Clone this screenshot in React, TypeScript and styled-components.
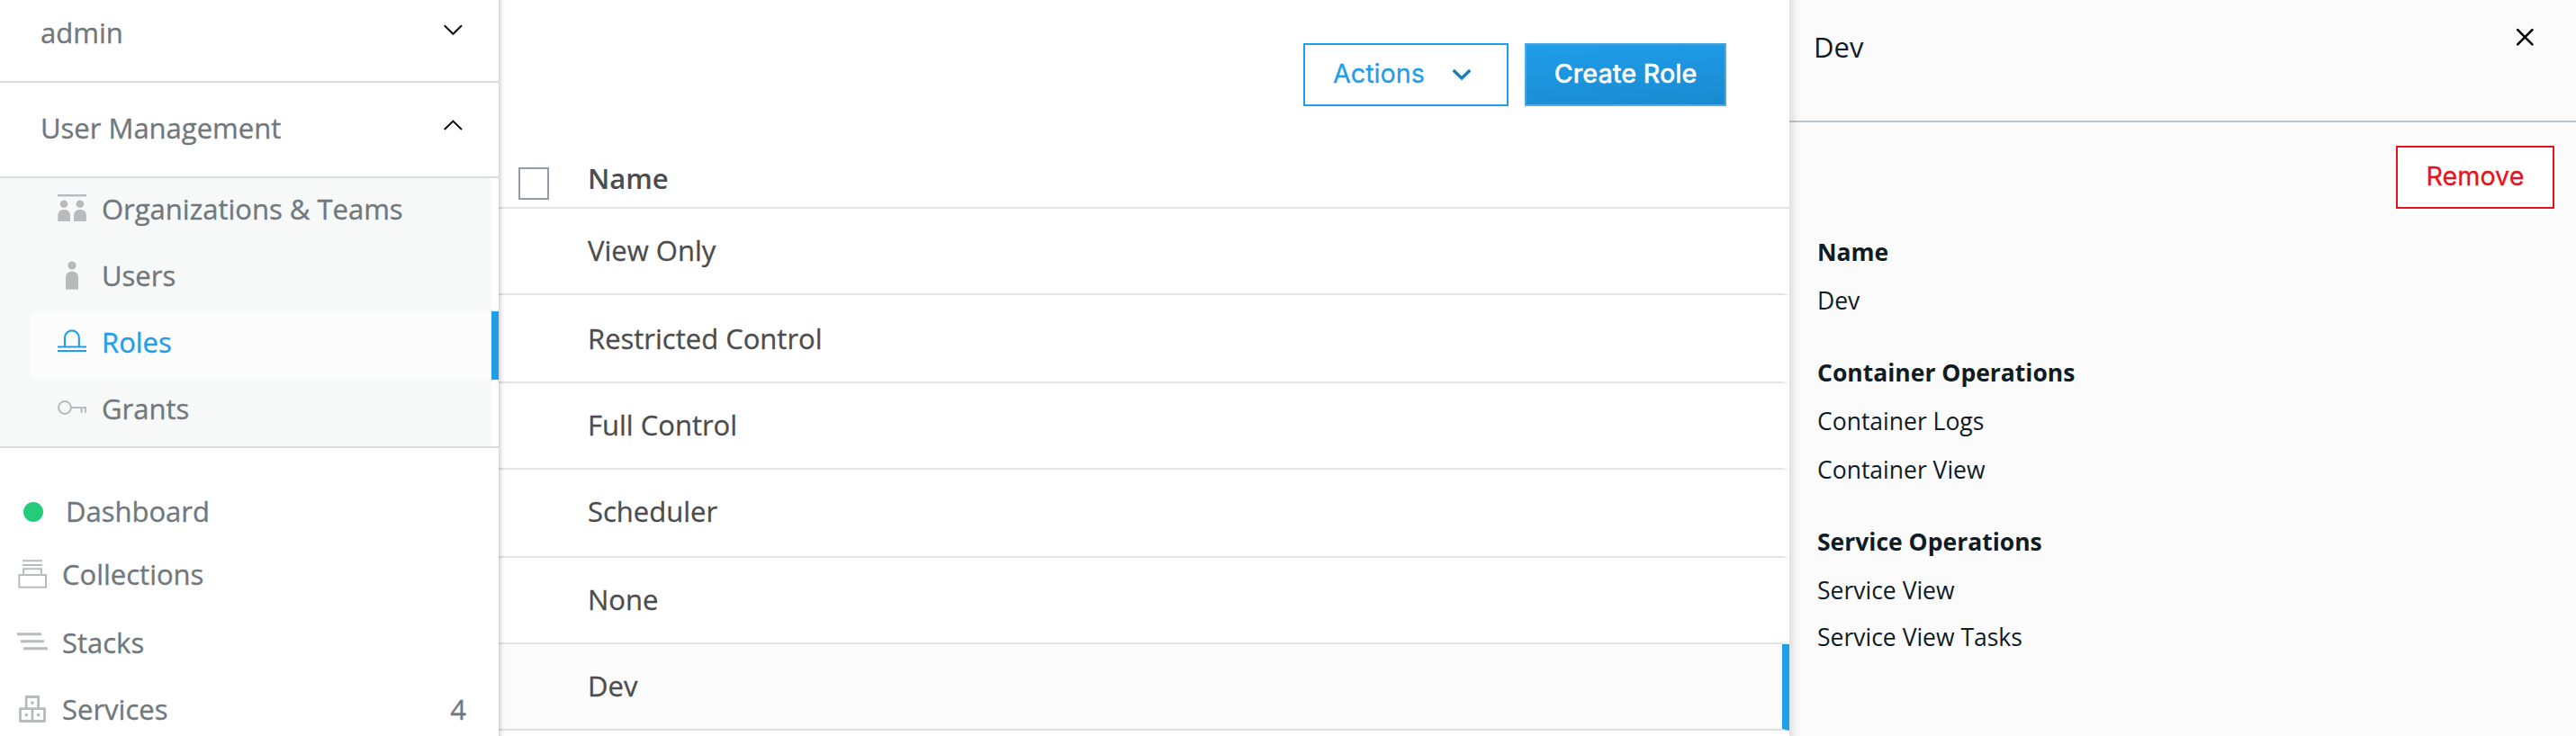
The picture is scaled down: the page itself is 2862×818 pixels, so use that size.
import React from 'react';
import styled, { createGlobalStyle, css } from 'styled-components';

const blue = '#1f9ee9';

const GlobalStyle = createGlobalStyle`
  * { box-sizing: border-box; }
  body {
    margin: 0;
    background: #fff;
    font-family: "Open Sans", "Noto Sans", sans-serif;
    font-size: 31px;
  }
  button { font: inherit; cursor: pointer; }
`;

const Page = styled.div`
  display: grid;
  grid-template-columns: 554px 1434px 1fr;
  height: 818px;
  overflow: hidden;
`;

/* Sidebar */

const Sidebar = styled.nav`
  display: flex;
  flex-direction: column;
  color: #70787d;
  background: #fff;
  overflow: hidden;
  -webkit-text-stroke: 0.35px currentColor;
`;

const SectionHeader = styled.div<{ $height: number; $line: number }>`
  display: flex;
  flex: none;
  justify-content: space-between;
  height: ${p => p.$height}px;
  padding: 0 40px 0 45px;
  line-height: ${p => p.$line}px;
  border-bottom: 2px solid #dcdcdc;
`;

const SectionChevron = styled.svg<{ $top: number }>`
  width: 22px;
  height: 14px;
  margin-top: ${p => p.$top}px;
  fill: none;
  stroke: #0a0a0a;
  stroke-width: 2;
`;

const SubMenu = styled.div`
  flex: none;
  height: 300px;
  padding-right: 8px;
  border-bottom: 2px solid #dcdcdc;
  background: #f7f9f8;
  background-clip: content-box;
`;

const SubItem = styled.div<{ $active?: boolean }>`
  display: flex;
  align-items: center;
  gap: 17px;
  height: 74px;
  margin-left: 34px;
  padding: 0 0 6px 30px;
  line-height: 68px;
  ${p =>
    p.$active &&
    css`
      height: 76px;
      margin-right: -8px;
      margin-bottom: -2px;
      padding-bottom: 8px;
      border-right: 8px solid ${blue};
      background: #fcfcfc;
      color: ${blue};
    `}
`;

const SubIcon = styled.svg<{ $active?: boolean }>`
  width: 32px;
  height: 40px;
  color: ${p => (p.$active ? blue : '#b8bbbe')};
`;

const NavList = styled.div`
  padding-top: 35px;
`;

const NavItem = styled.div<{ $after?: number }>`
  display: flex;
  align-items: center;
  gap: 16px;
  height: 70px;
  margin-bottom: ${p => p.$after ?? 0}px;
  padding: 0 36px 0 19px;
  line-height: 70px;
`;

const NavIcon = styled.svg`
  width: 34px;
  height: 40px;
  color: #b8bbbe;
`;

const StatusDot = styled.span`
  width: 22px;
  height: 22px;
  margin: 2px 9px 0 7px;
  border-radius: 50%;
  background: #24cb7a;
`;

const Count = styled.span`
  margin-left: auto;
`;

/* Role list */

const Main = styled.main`
  position: relative;
  display: flex;
  flex-direction: column;
  background: #fff;
  color: #4c4c4c;
  -webkit-text-stroke: 0.3px currentColor;

  &::before {
    content: '';
    position: absolute;
    inset: 0 auto 0 0;
    width: 8px;
    background: linear-gradient(to right, rgba(0, 0, 0, 0.17), rgba(0, 0, 0, 0.06) 38%, rgba(0, 0, 0, 0.015) 72%, transparent);
  }
`;

const Toolbar = styled.div`
  display: flex;
  justify-content: flex-end;
  gap: 18px;
  padding: 48px 70px 0 0;
`;

const Button = styled.button<{ $kind: 'outline' | 'primary' | 'danger'; $width: number }>`
  display: flex;
  align-items: center;
  justify-content: center;
  width: ${p => p.$width}px;
  height: 70px;
  padding: 0 0 3px;
  border: 2px solid ${blue};
  border-radius: 0;
  background: #fff;
  color: ${blue};
  font-family: Inter, "Liberation Sans", sans-serif;
  font-size: 28.7px;
  -webkit-text-stroke: 0.3px currentColor;
  ${p =>
    p.$kind === 'outline' &&
    css`
      justify-content: space-between;
      padding-left: 31px;
      padding-right: 39px;
    `}
  ${p =>
    p.$kind === 'primary' &&
    css`
      border-color: rgba(255, 255, 255, 0.2);
      background: linear-gradient(175deg, #1f9ee9, #1a8ad0);
      color: #fff;
      font-weight: 500;
    `}
  ${p =>
    p.$kind === 'danger' &&
    css`
      border-color: #e51320;
      color: #e51320;
    `}
`;

const ButtonChevron = styled.svg`
  width: 22px;
  height: 14px;
  margin-top: 2px;
  fill: none;
  stroke: #1a7cb8;
  stroke-width: 3.4;
`;

const TableHead = styled.div`
  display: flex;
  height: 114px;
  padding-left: 22px;
  border-bottom: 2px solid #e3e3e3;
  font-weight: 600;
  -webkit-text-stroke: 0;
`;

const Checkbox = styled.span`
  width: 34px;
  height: 36px;
  margin-top: 68px;
  border: 2px solid #919da8;
  background: #fff;
`;

const HeadLabel = styled.span`
  margin-left: 43px;
  padding-top: 44px;
  line-height: 72px;
`;

const Row = styled.div<{ $height: number; $offset?: number; $selected?: boolean }>`
  flex: none;
  height: ${p => p.$height}px;
  padding: ${p => p.$offset ?? 0}px 0 0 99px;
  border-right: 8px solid ${p => (p.$selected ? blue : 'transparent')};
  border-bottom: 2px solid ${p => (p.$selected ? '#dfdfdf' : '#e3e3e3')};
  background: ${p => (p.$selected ? '#fbfbfb' : '#fff')};
  line-height: 92px;
`;

/* Detail panel */

const Detail = styled.aside`
  position: relative;
  background: #fbfbfb;
  color: #0f1c24;

  &::before {
    content: '';
    position: absolute;
    inset: 0 auto 0 0;
    width: 14px;
    background: linear-gradient(to right, rgba(0, 0, 0, 0.1), rgba(0, 0, 0, 0.065) 30%, rgba(0, 0, 0, 0.02) 62%, transparent);
  }
`;

const DetailHeader = styled.header`
  display: flex;
  justify-content: space-between;
  height: 136px;
  padding: 0 46px 0 27px;
  border-bottom: 2px solid #bdc7cb;
  line-height: 104px;
`;

const CloseIcon = styled.svg`
  width: 22px;
  height: 22px;
  margin-top: 30px;
  stroke: #000;
  stroke-width: 2.6;
  stroke-linecap: round;
`;

const DetailActions = styled.div`
  display: flex;
  justify-content: flex-end;
  padding: 26px 24px 21px 0;
`;

const Field = styled.section`
  margin-bottom: 26px;
  padding-left: 31px;
  font-size: 26.5px;
  line-height: 54px;
`;

const FieldName = styled.div`
  font-weight: 700;
`;

const FieldValue = styled.div<{ $tight?: boolean }>`
  line-height: ${p => (p.$tight ? 50 : 54)}px;
`;

const TeamsIcon = () => (
  <SubIcon viewBox="0 0 32 40" fill="currentColor">
    <rect x="0" y="4" width="32" height="2.4" />
    <circle cx="7" cy="14.8" r="4.3" />
    <circle cx="24.9" cy="14.8" r="4.3" />
    <path d="M0.3 34V27.5C0.3 23.5 3 21 7.2 21S14 23.5 14 27.5V34Z" />
    <path d="M18 34V27.5C18 23.5 20.7 21 24.9 21S31.8 23.5 31.8 27.5V34Z" />
  </SubIcon>
);

const UserIcon = () => (
  <SubIcon viewBox="0 0 32 40" fill="currentColor">
    <circle cx="16" cy="9" r="4.6" />
    <path d="M9 35.7V22.5A7 7 0 0 1 23 22.5V35.7Z" />
  </SubIcon>
);

const RoleIcon = () => (
  <SubIcon $active viewBox="0 0 32 40" fill="none" stroke="currentColor" strokeWidth="2.1">
    <path d="M8 25V15.3A7.9 7.9 0 0 1 23.8 15.3V25" />
    <path d="M0 25.5H32M0 30H32" />
  </SubIcon>
);

const KeyIcon = () => (
  <SubIcon viewBox="0 0 32 40" fill="none" stroke="currentColor" strokeWidth="2">
    <circle cx="8" cy="19" r="6.9" />
    <path d="M15 19H32M26.6 19V24.7M30.9 19V24.7" />
  </SubIcon>
);

const CollectionsIcon = () => (
  <NavIcon viewBox="0 0 34 40" fill="none" stroke="currentColor" strokeWidth="2">
    <path d="M6 5.2H28M6 10H28M7 21V14.3H27V21" />
    <rect x="2.3" y="21" width="29.7" height="13.7" />
  </NavIcon>
);

const StacksIcon = () => (
  <NavIcon viewBox="0 0 34 40" fill="currentColor">
    <rect x="0" y="9.3" width="27" height="3" />
    <rect x="4" y="17.3" width="26" height="3" />
    <rect x="7" y="25.3" width="27" height="3" />
  </NavIcon>
);

const ServicesIcon = () => (
  <NavIcon viewBox="0 0 34 40" fill="none" stroke="currentColor" strokeWidth="2.8" strokeLinejoin="round">
    <path d="M10.2 19.5V6.5H23.6V19.5" />
    <path d="M3.5 19.7H30.5V33.5H3.5ZM16.9 19.7V33.5" />
    <path d="M15.2 13.1H18.4M8.7 26.6H11.9M22 26.6H25.2" strokeWidth="3.2" />
  </NavIcon>
);

const roles = [
  { name: 'View Only', height: 96 },
  { name: 'Restricted Control', height: 98, offset: 2 },
  { name: 'Full Control', height: 96 },
  { name: 'Scheduler', height: 98 },
  { name: 'None', height: 96 },
  { name: 'Dev', height: 96, selected: true },
];

const fields = [
  { name: 'Name', values: ['Dev'] },
  { name: 'Container Operations', values: ['Container Logs', 'Container View'] },
  { name: 'Service Operations', values: ['Service View', 'Service View Tasks'] },
];

export default function App() {
  return (
    <>
      <GlobalStyle />
      <Page>
        <Sidebar>
          <SectionHeader $height={92} $line={72}>
            admin
            <SectionChevron $top={26} viewBox="0 0 22 14">
              <path d="M1.7 2.3L11.4 11.8L21 2.3" />
            </SectionChevron>
          </SectionHeader>
          <SectionHeader $height={106} $line={100}>
            User Management
            <SectionChevron $top={40} viewBox="0 0 22 14">
              <path d="M1.7 12L11.4 2.6L21 12" />
            </SectionChevron>
          </SectionHeader>
          <SubMenu>
            <SubItem><TeamsIcon />Organizations &amp; Teams</SubItem>
            <SubItem><UserIcon />Users</SubItem>
            <SubItem $active><RoleIcon />Roles</SubItem>
            <SubItem><KeyIcon />Grants</SubItem>
          </SubMenu>
          <NavList>
            <NavItem><StatusDot />Dashboard</NavItem>
            <NavItem $after={6}><CollectionsIcon />Collections</NavItem>
            <NavItem $after={4}><StacksIcon />Stacks</NavItem>
            <NavItem><ServicesIcon />Services<Count>4</Count></NavItem>
          </NavList>
        </Sidebar>

        <Main>
          <Toolbar>
            <Button $kind="outline" $width={228}>
              Actions
              <ButtonChevron viewBox="0 0 22 14">
                <path d="M1.7 2L11 11L20.3 2" />
              </ButtonChevron>
            </Button>
            <Button $kind="primary" $width={224}>Create Role</Button>
          </Toolbar>
          <TableHead>
            <Checkbox />
            <HeadLabel>Name</HeadLabel>
          </TableHead>
          {roles.map(r => (
            <Row key={r.name} $height={r.height} $offset={r.offset} $selected={r.selected}>
              {r.name}
            </Row>
          ))}
        </Main>

        <Detail>
          <DetailHeader>
            Dev
            <CloseIcon viewBox="0 0 22 22">
              <path d="M3.2 3.2L19.4 19.4M19.4 3.2L3.2 19.4" />
            </CloseIcon>
          </DetailHeader>
          <DetailActions>
            <Button $kind="danger" $width={176}>Remove</Button>
          </DetailActions>
          {fields.map(f => (
            <Field key={f.name}>
              <FieldName>{f.name}</FieldName>
              {f.values.map(v => (
                <FieldValue key={v} $tight={v === 'Service View Tasks'}>{v}</FieldValue>
              ))}
            </Field>
          ))}
        </Detail>
      </Page>
    </>
  );
}
